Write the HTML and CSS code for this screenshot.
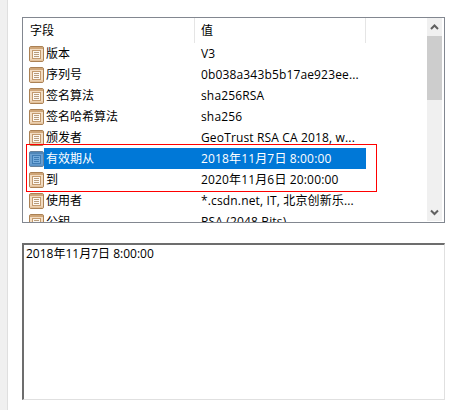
FILE: index.html
```html
<!DOCTYPE html>
<html lang="zh-CN">
<head>
    <meta charset="UTF-8">
    <meta name="viewport" content="width=device-width, initial-scale=1.0">
    <title>证书详细信息</title>
    <link rel="stylesheet" href="styles.css">
</head>
<body>
    <svg class="defs" width="0" height="0" aria-hidden="true">
        <symbol id="field-icon" viewBox="0 0 15 16">
            <rect x="0.5" y="0.5" width="14" height="15" rx="1.5" fill="#f2dcc2" stroke="#ab8154"/>
            <rect x="1" y="1" width="13" height="2" fill="#cfa679"/>
            <rect x="3.5" y="4.5" width="8" height="8" fill="#fdf8f1" stroke="#c39a6e"/>
            <path d="M5 6.5h5M5 8.5h5M5 10.5h5" stroke="#b89c7c" stroke-width="1"/>
            <rect x="1" y="13.5" width="13" height="1.5" fill="#e3c29c"/>
        </symbol>
        <symbol id="field-icon-selected" viewBox="0 0 15 16">
            <rect x="0.5" y="0.5" width="14" height="15" rx="1.5" fill="#6a9fd0" stroke="#66809a"/>
            <rect x="1" y="1" width="13" height="2" fill="#4f86b8"/>
            <rect x="3.5" y="4.5" width="8" height="8" fill="#74abdc" stroke="#3f7cb4"/>
            <path d="M5 6.5h5M5 8.5h5M5 10.5h5" stroke="#3f7cb4" stroke-width="1"/>
            <rect x="1" y="13.5" width="13" height="1.5" fill="#5a92c6"/>
        </symbol>
    </svg>

    <div class="page">
        <div class="side-strip"></div>
        <div class="content">
            <div class="list-box">
                <div class="list">
                    <div class="list-header">
                        <div class="col-name">字段</div>
                        <div class="col-value">值</div>
                        <div class="col-rest"></div>
                    </div>
                    <div class="row">
                        <svg class="icon"><use href="#field-icon"/></svg>
                        <span class="name">版本</span><span class="value">V3</span>
                    </div>
                    <div class="row">
                        <svg class="icon"><use href="#field-icon"/></svg>
                        <span class="name">序列号</span><span class="value">0b038a343b5b17ae923ee...</span>
                    </div>
                    <div class="row">
                        <svg class="icon"><use href="#field-icon"/></svg>
                        <span class="name">签名算法</span><span class="value">sha256RSA</span>
                    </div>
                    <div class="row">
                        <svg class="icon"><use href="#field-icon"/></svg>
                        <span class="name">签名哈希算法</span><span class="value">sha256</span>
                    </div>
                    <div class="row">
                        <svg class="icon"><use href="#field-icon"/></svg>
                        <span class="name">颁发者</span><span class="value">GeoTrust RSA CA 2018, w...</span>
                    </div>
                    <div class="row selected">
                        <svg class="icon"><use href="#field-icon-selected"/></svg>
                        <span class="name">有效期从</span><span class="value">2018年11月7日 8:00:00</span>
                    </div>
                    <div class="row">
                        <svg class="icon"><use href="#field-icon"/></svg>
                        <span class="name">到</span><span class="value">2020年11月6日 20:00:00</span>
                    </div>
                    <div class="row">
                        <svg class="icon"><use href="#field-icon"/></svg>
                        <span class="name">使用者</span><span class="value">*.csdn.net, IT, 北京创新乐...</span>
                    </div>
                    <div class="row">
                        <svg class="icon"><use href="#field-icon"/></svg>
                        <span class="name">公钥</span><span class="value">RSA (2048 Bits)</span>
                    </div>
                </div>
                <div class="scrollbar">
                    <svg class="arrow" width="15" height="18" viewBox="0 0 15 18"><path d="M4 11l3.5-3.5 3.5 3.5" fill="none" stroke="#606060" stroke-width="2"/></svg>
                    <div class="track"><div class="thumb"></div></div>
                    <svg class="arrow" width="15" height="18" viewBox="0 0 15 18"><path d="M4 7.5l3.5 3.5 3.5-3.5" fill="none" stroke="#606060" stroke-width="2"/></svg>
                </div>
                <div class="red-mark"></div>
            </div>
            <div class="detail-box">2018年11月7日 8:00:00</div>
        </div>
    </div>
</body>
</html>
```

FILE: styles.css
```css
body {
    margin: 0;
    background-color: #fff;
    color: #000;
    font-family: "Open Sans", "Noto Sans CJK SC", sans-serif;
    font-size: 12px;
    overflow: hidden;
}

.defs {
    position: absolute;
}

.page {
    display: flex;
    height: 410px;
}

.side-strip {
    width: 7px;
    background-color: #f0f0f0;
    border-right: 1px solid #dfdfdf;
}

.content {
    width: 423px;
    padding: 17px 0 0 14px;
}

.list-box {
    position: relative;
    display: flex;
    width: 421px;
    height: 204px;
    border: 1px solid #828790;
    overflow: hidden;
}

.list {
    flex: 1;
    overflow: hidden;
}

.list-header {
    display: flex;
    height: 25px;
    line-height: 26px;
}

.col-name {
    width: 164px;
    padding-left: 7px;
    border-right: 1px solid #e5e5e5;
}

.col-value {
    width: 164px;
    padding-left: 6px;
    border-right: 1px solid #e5e5e5;
}

.row {
    display: flex;
    align-items: center;
    height: 21px;
    padding-left: 6px;
    white-space: nowrap;
}

.icon {
    width: 15px;
    height: 16px;
    flex: none;
}

.name {
    width: 155px;
    padding-left: 2px;
    line-height: 21px;
}

.value {
    width: 165px;
    line-height: 21px;
    letter-spacing: 0.15px;
}

.row.selected .name,
.row.selected .value {
    background-color: #0078d7;
    color: #fff;
}

.scrollbar {
    width: 15px;
    margin: 0 2px 1px 0;
    display: flex;
    flex-direction: column;
    background-color: #f0f0f0;
}

.arrow {
    display: block;
    flex: none;
}

.track {
    flex: 1;
}

.thumb {
    height: 64px;
    background-color: #cdcdcd;
}

.red-mark {
    position: absolute;
    left: 3px;
    top: 126px;
    width: 349px;
    height: 46px;
    border: 1px solid #ff0000;
}

.detail-box {
    box-sizing: border-box;
    width: 423px;
    height: 157px;
    margin-top: 20px;
    padding: 0 2px;
    line-height: 18px;
    border-style: solid;
    border-width: 2px 1px 1px 2px;
    border-color: #6d6d6d #e0e0e0 #e0e0e0 #6d6d6d;
}
```
